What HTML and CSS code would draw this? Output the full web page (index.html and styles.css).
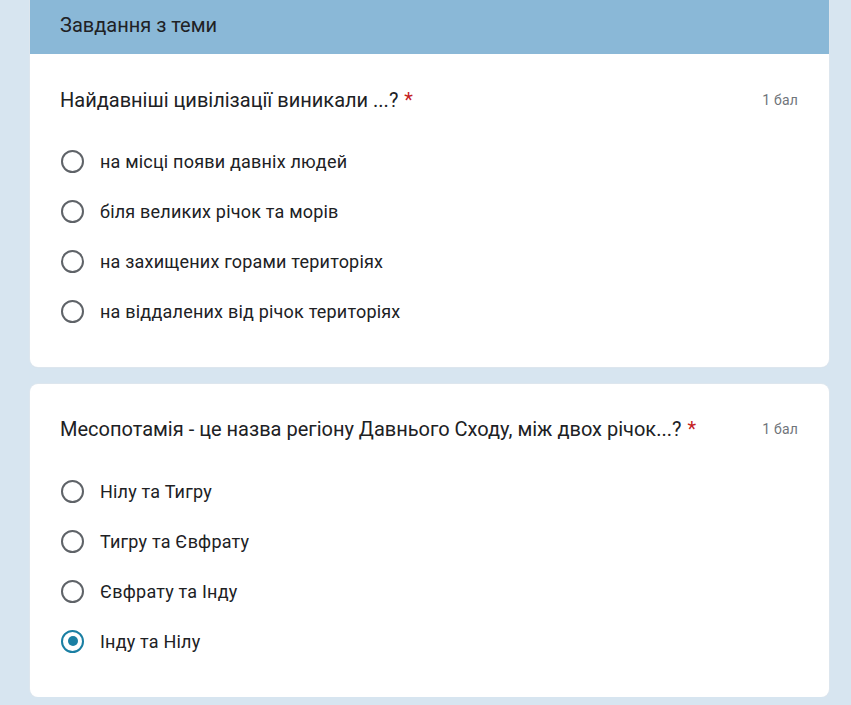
FILE: index.html
```html
<!DOCTYPE html>
<html lang="uk">
<head>
<meta charset="utf-8">
<link rel="stylesheet" href="styles.css">
</head>
<body>
<div class="page">
  <section class="card card-first">
    <div class="section-head">Завдання з теми</div>
    <div class="question">
      <div class="q-title"><span class="q-text">Найдавніші цивілізації виникали ...?</span><span class="req">*</span><span class="points">1 бал</span></div>
      <div class="options">
        <div class="option"><span class="radio"></span><span class="label">на місці появи давніх людей</span></div>
        <div class="option"><span class="radio"></span><span class="label">біля великих річок та морів</span></div>
        <div class="option"><span class="radio"></span><span class="label">на захищених горами територіях</span></div>
        <div class="option"><span class="radio"></span><span class="label">на віддалених від річок територіях</span></div>
      </div>
    </div>
  </section>
  <section class="card card-second">
    <div class="question">
      <div class="q-title"><span class="q-text">Месопотамія - це назва регіону Давнього Сходу, між двох річок...?</span><span class="req">*</span><span class="points">1 бал</span></div>
      <div class="options">
        <div class="option"><span class="radio"></span><span class="label">Нілу та Тигру</span></div>
        <div class="option"><span class="radio"></span><span class="label">Тигру та Євфрату</span></div>
        <div class="option"><span class="radio"></span><span class="label">Євфрату та Інду</span></div>
        <div class="option"><span class="radio checked"></span><span class="label">Інду та Нілу</span></div>
      </div>
    </div>
  </section>
</div>
</body>
</html>
```
FILE: styles.css
```css
html, body {
  margin: 0;
  padding: 0;
  background: #d7e5f0;
  font-family: Roboto, "Noto Sans", Arial, sans-serif;
  color: #202124;
}
.page {
  width: 799px;
  margin-left: 30px;
  display: flex;
  flex-direction: column;
  gap: 17px;
}
.card {
  background: #fff;
  border-radius: 8px;
  box-shadow: 0 0 0 1px #dde6ee, 0 1px 1px rgba(0,0,0,0.04);
  overflow: hidden;
}
.card-first {
  border-radius: 0 0 8px 8px;
}
.section-head {
  height: 54px;
  background: #8ab8d7;
  padding-left: 30px;
  font-size: 20px;
  line-height: 51px;
  color: #202124;
}
.question {
  padding: 34px 31px 31px 30px;
}
.card-second .question {
  padding-top: 33px;
}
.q-title {
  display: flex;
  align-items: center;
  font-size: 20px;
  line-height: 24px;
}
.req {
  color: #c5221f;
  margin-left: 6px;
}
.points {
  margin-left: auto;
  font-size: 14px;
  letter-spacing: 0.2px;
  color: #70757a;
}
.options {
  margin-top: 24px;
  display: flex;
  flex-direction: column;
}
.card-second .options {
  margin-top: 25px;
}
.option {
  height: 50px;
  display: flex;
  align-items: center;
}
.radio {
  box-sizing: border-box;
  width: 23px;
  height: 23px;
  border: 2px solid #5f6368;
  border-radius: 50%;
  margin-left: 1px;
  margin-right: 16px;
  position: relative;
  flex: none;
}
.radio.checked {
  border-color: #1a7fa3;
}
.radio.checked::after {
  content: "";
  position: absolute;
  left: 4.5px;
  top: 4.5px;
  width: 10px;
  height: 10px;
  border-radius: 50%;
  background: #1a7fa3;
}
.label {
  font-size: 18px;
  letter-spacing: 0.2px;
  color: #202124;
}
```
